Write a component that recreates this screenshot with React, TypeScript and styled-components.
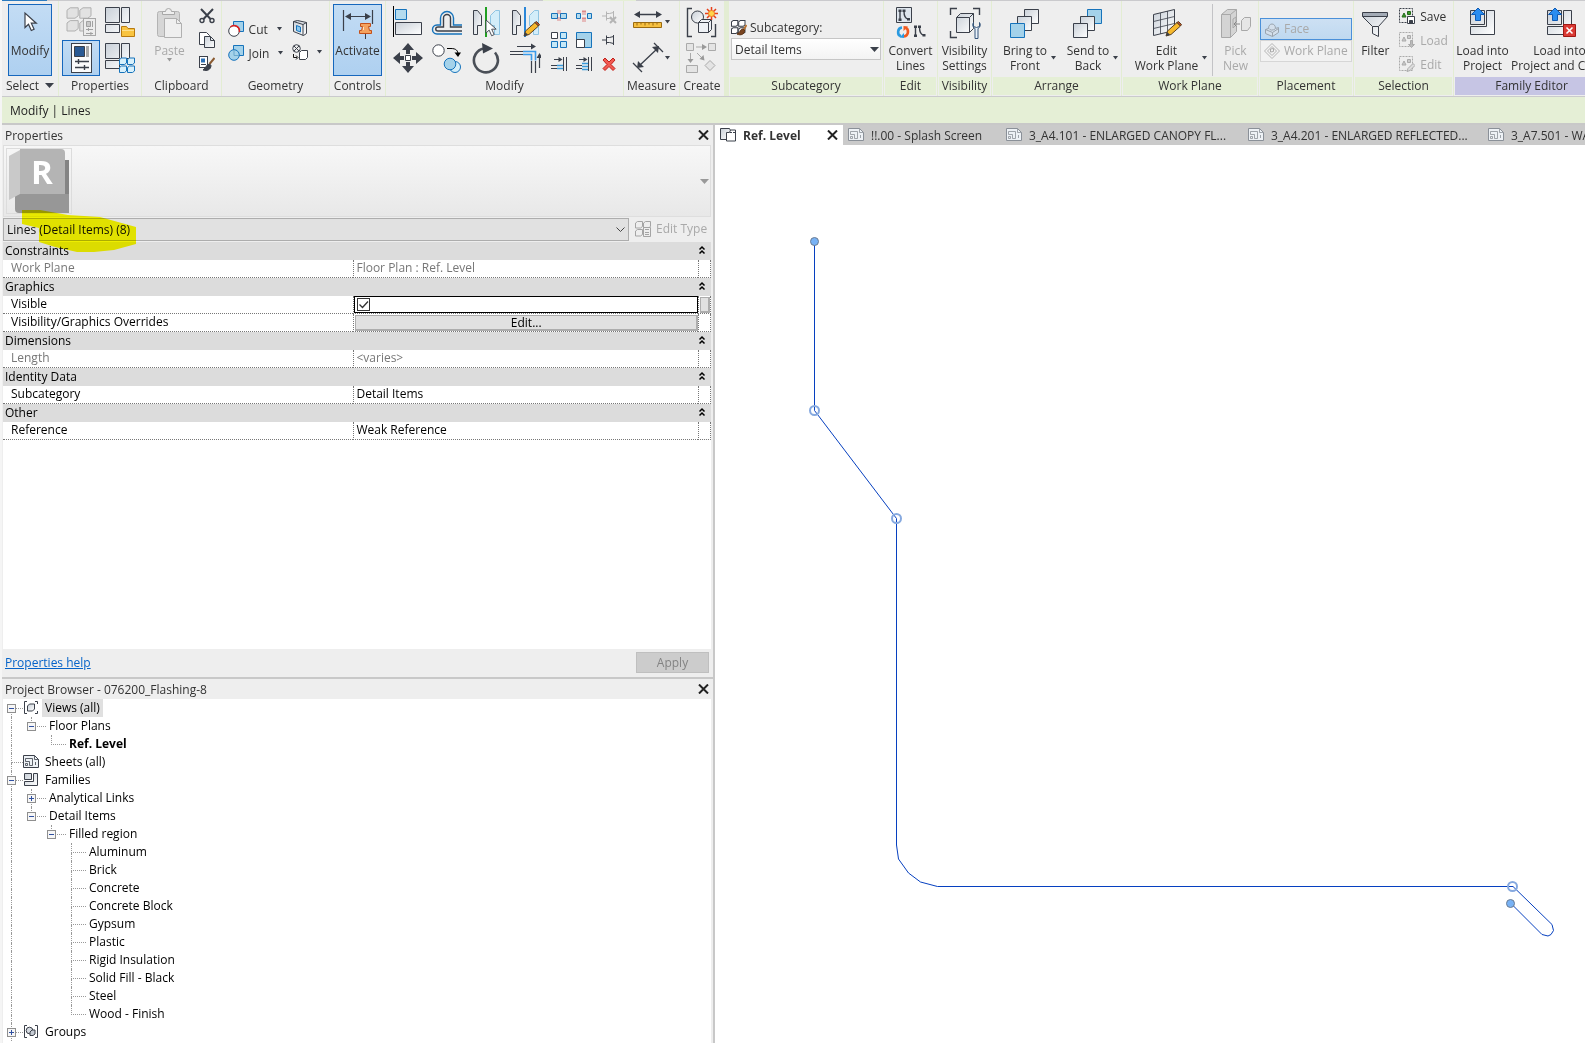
import React from "react";
import styled, { createGlobalStyle, css } from "styled-components";

const INK = "#3b404a";
const BLUE = "#1673bb";
const MUTED = "#a9a9a9";

const GlobalStyle = createGlobalStyle`
  * { box-sizing: border-box; }
  html, body { margin: 0; background: #fff; }
  body, button, select, input, table {
    font-family: "Open Sans", "Noto Sans", sans-serif;
    font-size: 12px;
    line-height: 15px;
  }
  button, select { border: 0; padding: 0; margin: 0; background: none; color: inherit; }
  svg { display: block; flex: none; }
`;

const Defs = styled.svg`
  position: absolute;
  width: 0;
  height: 0;
`;

/* ---------- page shell ---------- */

const Page = styled.div`
  display: flex;
  flex-direction: column;
  height: 100vh;
  min-height: 760px;
  padding-left: 2px;
  overflow: hidden;
  background: #f5f5f5;
  color: #333;
`;

const TopEdge = styled.div`
  flex: 0 0 1px;
  background: linear-gradient(
    90deg,
    #2a7abf 45px,
    #cacacd 45px 541px,
    #e5efd6 541px 634px,
    #cacacd 634px
  );
`;

const Ribbon = styled.header`
  display: flex;
  flex: 0 0 96px;
  overflow: hidden;
  background: #eee;
  border-bottom: 1px solid #cacacd;
`;

const OptionsBar = styled.div`
  display: flex;
  align-items: center;
  flex: 0 0 26px;
  padding: 0 8px;
  background: #e5efd6;
  color: #222;
`;

const Workspace = styled.main`
  display: grid;
  grid-template-columns: minmax(360px, 713fr) minmax(300px, 870fr);
  flex: 1;
  min-height: 0;
  border-top: 2px solid #c8c8c8;
`;

const Dock = styled.div`
  display: flex;
  flex-direction: column;
  min-width: 0;
  min-height: 0;
  padding: 0 2px 0 1px;
  background: #eee;
  border-right: 2px solid #c8c8c8;
`;

/* ---------- ribbon ---------- */

const Group = styled.section<{ $w: number; $wideEdge?: boolean }>`
  display: flex;
  flex-direction: column;
  flex: 0 0 ${(p) => p.$w}px;
  min-width: 0;
  padding-top: 1px;
  border-right: ${(p) => (p.$wideEdge ? 5 : 1)}px solid #e3edd3;
`;

const GroupBody = styled.div<{ $gap?: number; $pad?: number }>`
  display: flex;
  align-items: flex-start;
  justify-content: center;
  gap: ${(p) => p.$gap ?? 0}px;
  height: 75px;
  padding: 2px ${(p) => p.$pad ?? 0}px 0;
`;

const GroupLabel = styled.div<{ $tone?: "green" | "violet" }>`
  display: flex;
  align-items: center;
  justify-content: center;
  gap: 6px;
  height: 18px;
  margin: 0 1px;
  padding-bottom: 1px;
  white-space: nowrap;
  background: ${(p) => (p.$tone === "green" ? "#e5efd6" : p.$tone === "violet" ? "#c6c5e4" : "none")};
`;

const pressed = css`
  background: linear-gradient(#c3dcf4, #aed0f0);
  outline: 1px solid #1667bd;
  outline-offset: -1px;
`;

const LargeButton = styled.button<{ $w: number; $on?: boolean }>`
  display: flex;
  flex-direction: column;
  align-items: center;
  flex: 0 0 ${(p) => p.$w}px;
  min-width: 0;
  height: 72px;
  padding-top: 3px;
  text-align: center;
  white-space: nowrap;
  &:disabled { color: ${MUTED}; }
  ${(p) => p.$on && pressed}
`;

const Caption = styled.span<{ $menu?: boolean }>`
  display: grid;
  grid-template-columns: ${(p) => (p.$menu ? "10px auto 10px" : "0 auto 0")};
  align-items: center;
  margin-top: 4px;
  & > :first-child { grid-column: 2; }
  & > svg { justify-self: end; }
`;

const IconGrid = styled.div<{ $cols: number; $col: number; $row: number }>`
  display: grid;
  grid-template-columns: repeat(${(p) => p.$cols}, ${(p) => p.$col}px);
  grid-auto-rows: ${(p) => p.$row}px;
`;

const IconButton = styled.button<{ $on?: boolean }>`
  display: flex;
  align-items: center;
  justify-content: center;
  ${(p) => p.$on && pressed}
`;

const RowList = styled.div<{ $top?: number; $end?: number }>`
  display: flex;
  flex-direction: column;
  align-items: flex-start;
  padding: ${(p) => p.$top ?? 0}px ${(p) => p.$end ?? 0}px 0 0;
`;

const RowButton = styled.button`
  display: flex;
  align-items: center;
  gap: 5px;
  height: 24px;
  white-space: nowrap;
  &:disabled { color: ${MUTED}; }
  & > svg:nth-child(2) { margin-left: 3px; }
`;

const ToggleList = styled.div`
  display: flex;
  flex-direction: column;
  flex: 1;
  padding-top: 14px;
`;

const Toggle = styled.button<{ $on?: boolean }>`
  display: flex;
  align-items: center;
  gap: 4px;
  height: 22px;
  padding: 0 3px 1px;
  border: 1px solid ${(p) => (p.$on ? "#4a90d9" : "#d6d6d6")};
  background: ${(p) => (p.$on ? "linear-gradient(#cde0f3, #bfd9f0)" : "#f2f2f2")};
  white-space: nowrap;
  &:disabled { color: ${MUTED}; }
`;

const Separator = styled.div`
  width: 1px;
  height: 72px;
  margin: 0 2px;
  background: #c3c3c6;
`;

const Field = styled.div`
  display: flex;
  flex-direction: column;
  flex: 1;
  gap: 1px;
  padding-top: 14px;
`;

const FieldLabel = styled.label`
  display: flex;
  align-items: center;
  gap: 3px;
  height: 19px;
`;

const SelectBox = styled.div<{ $panel?: boolean }>`
  display: grid;
  align-items: center;
  flex: 1;
  & > * { grid-area: 1 / 1; }
  & > svg { justify-self: end; margin-right: ${(p) => (p.$panel ? 4 : 2)}px; pointer-events: none; }
`;

const Dropdown = styled.select<{ $panel?: boolean }>`
  width: 100%;
  height: ${(p) => (p.$panel ? 23 : 22)}px;
  padding: 0 3px;
  appearance: none;
  border: 1px solid ${(p) => (p.$panel ? "#adadad" : "#c6c6c6")};
  background: ${(p) => (p.$panel ? "#e1e1e1" : "linear-gradient(#fff, #f3f3f3)")};
  color: ${(p) => (p.$panel ? "#111" : "#333")};
`;

/* ---------- properties palette ---------- */

const Palette = styled.section<{ $fill?: boolean }>`
  display: flex;
  flex-direction: column;
  flex: ${(p) => (p.$fill ? "1 1 0" : "none")};
  min-height: 0;
`;

const PaletteTitle = styled.div`
  display: flex;
  align-items: center;
  justify-content: space-between;
  height: 20px;
  padding: 0 2px;
`;

const TypeCard = styled.div`
  display: flex;
  align-items: center;
  justify-content: space-between;
  height: 72px;
  padding: 0 1px 0 2px;
  border: 1px solid #dedede;
  background: linear-gradient(#f7f7f7, #e8e8e8);
`;

const Thumb = styled.div`
  display: flex;
  width: 66px;
  height: 66px;
  border: 1px solid #dcdcdc;
`;

const FilterRow = styled.div`
  position: relative;
  display: flex;
  align-items: center;
  gap: 6px;
  height: 25px;
`;

const Highlight = styled.svg`
  position: absolute;
  left: 19px;
  top: -7px;
  mix-blend-mode: multiply;
  pointer-events: none;
`;

const EditType = styled.button`
  display: flex;
  align-items: center;
  gap: 5px;
  width: 76px;
  padding-bottom: 2px;
  white-space: nowrap;
  &:disabled { color: ${MUTED}; }
`;

const TableArea = styled.div`
  flex: 1;
  min-height: 0;
  overflow: hidden;
  background: #fff;
`;

const Table = styled.table`
  width: 100%;
  table-layout: fixed;
  border-collapse: separate;
  border-spacing: 0;
  color: #000;
  & td, & th { height: 18px; padding: 0; line-height: 15px; font-weight: 400; text-align: left; white-space: nowrap; }
`;

const SectionHead = styled.th`
  background: #dcdcdc;
`;

const SectionLine = styled.div`
  display: flex;
  align-items: center;
  justify-content: space-between;
  height: 18px;
  padding: 0 4px 2px 2px;
`;

const PropName = styled.th<{ $dim?: boolean }>`
  border-bottom: 1px dotted #777;
  color: ${(p) => (p.$dim ? "#777" : "#000")};
  && { padding: 0 0 2px 8px; }
`;

const PropValue = styled.td<{ $dim?: boolean; $flush?: boolean }>`
  border-bottom: 1px dotted #777;
  border-left: 1px dotted #777;
  color: ${(p) => (p.$dim ? "#777" : "#000")};
  && { padding: ${(p) => (p.$flush ? "0" : "0 0 2px 2px")}; }
`;

const PropEnd = styled.td`
  border: dotted #777;
  border-width: 0 1px 1px;
`;

const ActiveCell = styled.div`
  display: flex;
  align-items: center;
  height: 17px;
  padding-left: 2px;
  border: 1px solid #000;
`;

const Check = styled.input`
  width: 13px;
  height: 13px;
  margin: 0;
  appearance: none;
  border: 1px solid #333;
  background: #fff;
  & + svg { visibility: hidden; }
  &:checked + svg { visibility: visible; }
`;

const CheckWrap = styled.label`
  display: grid;
  & > * { grid-area: 1 / 1; }
  & > svg { pointer-events: none; }
`;

const CellButton = styled.button`
  display: block;
  width: calc(100% - 1px);
  height: 16px;
  margin-left: 1px;
  border: 1px solid #adadad;
  border-width: 1px 2px 2px 1px;
  background: #e1e1e1;
  line-height: 13px;
`;

const PaletteFooter = styled.div`
  display: flex;
  align-items: center;
  justify-content: space-between;
  height: 28px;
  padding: 0 2px 2px;
`;

const HelpLink = styled.a`
  color: #0563c9;
  text-decoration: underline;
`;

const ApplyButton = styled.button`
  width: 73px;
  height: 21px;
  border: 1px solid #bfbfbf;
  background: #ccc;
  &:disabled { color: #838383; }
`;

/* ---------- project browser ---------- */

const BrowserTitle = styled(PaletteTitle)`
  height: 22px;
  margin: 0 -2px 0 -1px;
  padding: 0 4px 0 3px;
  border-top: 2px solid #c8c8c8;
`;

const Tree = styled.ul`
  margin: 0;
  padding: 0 0 2px;
  list-style: none;
  background: #fff;
  color: #000;
`;

const TreeRow = styled.li`
  display: flex;
  align-items: center;
  height: 18px;
  white-space: nowrap;
`;

const Guide = styled.span<{ $wide?: boolean }>`
  position: relative;
  display: grid;
  grid-template-columns: 8px 1fr;
  grid-template-rows: 10px 8px;
  flex: 0 0 ${(p) => (p.$wide ? 23 : 20)}px;
  height: 18px;
`;

const Arm = styled.i<{ $v?: boolean; $h?: boolean }>`
  grid-column: 2;
  border: 0 dotted #999;
  border-left-width: ${(p) => (p.$v ? 1 : 0)}px;
  border-bottom-width: ${(p) => (p.$h ? 1 : 0)}px;
`;

const Expander = styled.button`
  position: absolute;
  left: 4px;
  top: 5px;
  width: 9px;
  height: 9px;
  border: 1px solid #8f8f8f;
  background: #f6f6f6;
`;

const NodeText = styled.span<{ $sel?: boolean; $bold?: boolean; $icon?: boolean }>`
  height: 18px;
  padding: 0 3px;
  line-height: 18px;
  margin-left: ${(p) => (p.$icon ? 3 : 0)}px;
  background: ${(p) => (p.$sel ? "#e0e0e0" : "none")};
  font-weight: ${(p) => (p.$bold ? 700 : 400)};
`;

/* ---------- drawing area ---------- */

const Canvas = styled.div`
  display: flex;
  flex-direction: column;
  min-width: 0;
  min-height: 0;
  background: #fff;
`;

const TabStrip = styled.nav`
  display: flex;
  flex: 0 0 20px;
  overflow: hidden;
  background: #cacaca;
`;

const Tab = styled.button<{ $w: number; $on?: boolean }>`
  display: flex;
  align-items: center;
  gap: 7px;
  flex: 0 0 ${(p) => p.$w}px;
  padding: 0 5px;
  background: ${(p) => (p.$on ? "#fff" : "none")};
  font-weight: ${(p) => (p.$on ? 700 : 400)};
  white-space: nowrap;
  & > svg:last-child:not(:first-child) { margin-left: auto; }
`;

const Sketch = styled.svg`
  flex: 1;
  width: 100%;
  min-height: 0;
`;

/* ---------- icons ---------- */

type Kids = { children: React.ReactNode; s?: number; h?: number };
const Ic = ({ children, s = 16, h }: Kids) => (
  <svg width={s} height={h ?? s} viewBox={`0 0 ${s} ${h ?? s}`} fill="none" stroke={INK} strokeWidth="1" aria-hidden="true">
    {children}
  </svg>
);
const Big = ({ children }: { children: React.ReactNode }) => <Ic s={32}>{children}</Ic>;

const Caret = ({ color = INK }: { color?: string }) => (
  <svg width="7" height="4" viewBox="0 0 7 4" aria-hidden="true"><path d="M1 0h5L3.500 3.500z" fill={color} /></svg>
);
const WideCaret = ({ color = INK }: { color?: string }) => (
  <svg width="9" height="5" viewBox="0 0 9 5" aria-hidden="true"><path d="M0 0h9L4.500 5z" fill={color} /></svg>
);
const Cross = () => (
  <svg width="11" height="10" viewBox="0 0 11 10" stroke="#222" strokeWidth="2" aria-hidden="true"><path d="M1 .5l9 9M10 .5l-9 9" /></svg>
);
const DoubleUp = () => (
  <Ic s={10}><path d="M2.500 4.500l2.500-2.500 2.500 2.500M2.500 8.500l2.500-2.500 2.500 2.500" stroke="#000" strokeWidth="1.500" /></Ic>
);

const arrowCursor = "M0 0v14.500l3.500-3.300 2.800 6.300 2.800-1.300-2.800-6h5z";

const CursorIcon = () => (
  <Big><path d={arrowCursor} transform="translate(11 6)" fill="#fff" strokeWidth="1.200" /></Big>
);
const Cubes = ({ x, y, k = 1, c, f }: { x: number; y: number; k?: number; c: string; f: string }) => (
  <g transform={`translate(${x} ${y}) scale(${k})`} stroke={c} strokeWidth={1 / k} fill={f}>
    {[[0, 0], [8, 0], [0, 8], [8, 8]].map(([a, b]) => (
      <path key={`${a}-${b}`} d={`M${a} ${b + 2}l2-1.500h5v5l-2 1.500h-5z`} />
    ))}
  </g>
);
const Slider = ({ x, y, w, c = INK }: { x: number; y: number; w: number; c?: string }) => (
  <path d={`M${x} ${y}h${w}M${x + w * 0.35} ${y - 1.5}v3M${x} ${y + 4}h${w}M${x + w * 0.7} ${y + 2.5}v3`} stroke={c} />
);
const TypePropsIcon = () => (
  <Big>
    <Cubes x={2} y={1} k={1.6} c="#b0b0b0" f="#e2e2e2" />
    <rect x="18.500" y="12.500" width="12" height="17" fill="#ececec" stroke="#a8a8a8" />
    <path d="M21.500 15.500h4v5h-4z" stroke="#a0a0a0" fill="#c8c8c8" />
    <path d="M27.500 15v6" stroke="#a0a0a0" />
    <Slider x={21} y={23.5} w={7} c="#a0a0a0" />
  </Big>
);
const Windows = () => (
  <path d="M2.500 1.500h14v15h-14zM18.500 1.500h8v15h-8zM2.500 18.500h14v8h-14z" fill="url(#steel)" />
);
const FamilyFolderIcon = () => (
  <Big>
    <Windows />
    <path d="M18.500 30.500v-10h5l1.500 2h6.500v8z" fill="#f9c440" stroke="#b87a10" />
    <path d="M19 24.500h12" stroke="#ffe08a" />
  </Big>
);
const FamilyCubesIcon = () => (
  <Big><Windows /><Cubes x={16.5} y={15.5} c={BLUE} f="#d8f0fb" /></Big>
);
const PropsIcon = () => (
  <Big>
    <rect x="6.500" y="1.500" width="20" height="29" fill="#fbfbfb" />
    <path d="M9.500 4.500h10v10h-10z" fill="#2a5a94" />
    <path d="M21 4h3v11h-3z" fill="#aaa" stroke="none" />
    <path d="M10 19.500h14M10 25.500h14" strokeWidth="1.400" />
    <path d="M13.500 17v5M19.500 23v5" strokeWidth="1.400" />
  </Big>
);
const PasteIcon = () => (
  <Big>
    <rect x="3.500" y="4.500" width="22" height="25" rx="2" fill="#d6d6d6" stroke="#b4b4b4" />
    <path d="M8.500 7.500v-3h3a3 3 0 0 1 6 0h3v3z" fill="#eee" stroke="#a8a8a8" />
    <path d="M10.500 11.500h12l5 5v14h-17z" fill="#efefef" stroke="#b0b0b0" />
    <path d="M22.500 11.500v5h5" stroke="#b0b0b0" />
  </Big>
);
const CutIcon = () => (
  <Ic><path d="M2 1l9.500 10M14 1L4.500 11" strokeWidth="2" /><circle cx="3" cy="12.500" r="2" strokeWidth="1.400" /><circle cx="13" cy="12.500" r="2" strokeWidth="1.400" /></Ic>
);
const CopyIcon = () => (
  <Ic><path d="M.5 .5h7l3 3v9H.5z" fill="#fff" /><path d="M5.500 4.500h6l4 4v7h-10z" fill="url(#steel)" /><path d="M11.500 4.500v4h4" /></Ic>
);
const MatchIcon = () => (
  <Ic>
    <rect x=".5" y=".5" width="8" height="11" fill="#fff" />
    <path d="M2 2.500h4v4H2z" fill="#2a6fb5" stroke="none" /><path d="M2 8.500h5" />
    <path d="M15.500 2l-5 6" stroke="#8a5a30" strokeWidth="2" />
    <path d="M10.500 8c-3 .5-3 3-6.500 6 4 1.500 8-.5 8-4.500z" fill={INK} />
  </Ic>
);
const GeoCutIcon = () => (
  <Ic><path d="M5.500 .5h10v10h-10z" fill="#a4d2ea" stroke={BLUE} /><circle cx="6" cy="10" r="5.300" fill="#fff" /><path d="M2.500 6a5.300 5.300 0 0 1 8.800 5" stroke="#e02020" strokeWidth="1.500" /></Ic>
);
const GeoJoinIcon = () => (
  <Ic><path d="M5.500 .5h10v10h-10z" fill="#a4d2ea" stroke={BLUE} /><circle cx="6" cy="10" r="5.300" fill="#a4d2ea" stroke={BLUE} /><path d="M6 5v5.500h5" stroke="#6aa8cc" /></Ic>
);
const WallIcon = () => (
  <Ic><path d="M1.500 1.500l4-1 9 2v11l-3 2-10-4z" fill="url(#steel)" /><path d="M1.500 1.500l9.500 3v11M11 4.500l3.500-2" /><path d="M4.500 5.500l4 1.500v5l-4-1.500z" fill="#8cc8ee" stroke={BLUE} /></Ic>
);
const DemolishIcon = () => (
  <Ic><circle cx="4.500" cy="4.500" r="3.800" /><path d="M2 2l5 5M7 2L2 7" /><path d="M7.500 8.500l2-2h6v7l-2 2h-6z" fill="#fff" /><path d="M1.500 10v3.500H5M4 11.500l2 2-2 2" stroke="#111" /></Ic>
);
const ActivateIcon = () => (
  <Big>
    <path d="M1.500 3v21M30.500 3v14M4 9.500h24" strokeWidth="1.200" /><path d="M9 6L3 9.500 9 13zM23 6l6 3.500-6 3.500z" fill={INK} stroke="none" />
    <path d="M18.500 16.500h10v3h-2l1 4h2v3h-12v-3h2l1-4h-2z" fill="#f4a25e" stroke="#c4501a" /><path d="M21.500 20v3" stroke="#ffe0c0" /><path d="M23.500 27v5" />
  </Big>
);
const AlignIcon = () => (
  <Big><path d="M1.500 0v31" stroke="#000" /><path d="M3.500 3.500h11v10h-11z" fill="#b4dbee" stroke={BLUE} /><path d="M3.500 16.500h26v12h-26z" fill="url(#steel)" /></Big>
);
const OffsetIcon = () => (
  <Big>
    <path d="M31 28H6c-6 0-6-9 0-9h3.500v-7a6.500 6.500 0 0 1 13 0v7H31" stroke={BLUE} strokeWidth="1.400" />
    <path d="M31 25H7c-3 0-3-4 0-4h5.500v-9a3.500 3.500 0 0 1 7 0v9H31" strokeWidth="1.400" />
  </Big>
);
const mirrorHalves = (
  <>
    <path d="M3.500 4.500h4l4 5v10h-4v9h-4z" fill="url(#steel)" /><path d="M29.500 4.500h-4l-5 5v10h4v9h5z" fill="#d3edf9" stroke="#8fc4e2" />
  </>
);
const MirrorPickIcon = () => (
  <Big>{mirrorHalves}<path d="M16 1v30" stroke="#21a021" strokeWidth="2" /><path d={arrowCursor} transform="translate(16 14) scale(.9)" fill="#fff" /></Big>
);
const Pencil = ({ x, y }: { x: number; y: number }) => (
  <g transform={`translate(${x} ${y})`}>
    <path d="M0 15l1.500-5L11 1.500 14.500 5 5 13.500z" fill="#f7b92c" stroke="#5a4020" /><path d="M11 1.500L14.500 5l1-1.500L12.500.5z" fill="#c0502a" stroke="#5a4020" /><path d="M0 15l1.200-4L4 13.800z" fill={INK} stroke="none" />
  </g>
);
const MirrorDrawIcon = () => (
  <Big>{mirrorHalves}<path d="M16 1v30" stroke="#2a86d8" strokeWidth="2" /><Pencil x={15} y={15} /></Big>
);
const MoveIcon = () => (
  <Big>
    <path d="M16 1l6 7h-4v4h-4V8h-4zM16 31l-6-7h4v-4h4v4h4zM1 16l7-6v4h4v4H8v4zM31 16l-7 6v-4h-4v-4h4v-4z" fill={INK} stroke="none" />
    <path d="M13.500 13.500h5v5h-5z" fill="#fff" />
  </Big>
);
const CopyObjIcon = () => (
  <Big>
    <circle cx="7.500" cy="8.500" r="5.700" fill="#fff" /><path d="M16 6.500h4c5 0 7 2 7 6" stroke="#000" /><path d="M23.500 10.500L27 15l3-4.500z" fill="#000" stroke="none" />
    <circle cx="24" cy="25" r="5.500" fill="#d4eef9" stroke={BLUE} /><circle cx="19" cy="22" r="5.800" fill="#a4d2ea" stroke={BLUE} />
  </Big>
);
const RotateIcon = () => (
  <Big><path d="M25 10.500A12 12 0 1 1 14 6.500" stroke="#4a4f57" strokeWidth="2.600" /><path d="M12 1l11 5.500-10 5z" fill={INK} stroke="none" /></Big>
);
const TrimIcon = () => (
  <Big>
    <path d="M8 4.500h16M1 9.500h13M1 12.500h13M22.500 19v12M26.500 19v12M30.500 26V14" strokeWidth="1.200" /><path d="M22 1.500l5 3-5 3zM27.500 16l3-5 3 5z" fill={INK} stroke="none" />
    <path d="M14 9.500h12.500v9M14 12.500h8.500v6" stroke="#3a9ae9" strokeWidth="1.600" />
  </Big>
);
const SplitIcon = ({ gap }: { gap?: boolean }) => (
  <Ic>
    <path d={gap ? "M.5 5.500h4v5h-4zM11.500 5.500h4v5h-4z" : "M.5 5.500h6v5h-6zM9.500 5.500h6v5h-6z"} fill="#b4dbee" stroke={BLUE} />
    <path d="M7 2.500v4M9 2.500v4M7 9.500v4M9 9.500v4" stroke="#cc2222" strokeDasharray={gap ? "2 1" : "1 1"} />
  </Ic>
);
const PinIcon = ({ off }: { off?: boolean }) => {
  const c = off ? "#b4b4b4" : INK;
  return (
    <Ic>
      <path d="M1 8h4M5.500 3.500v9M5.500 5.500h3l4-1v7l-4-1h-3M12.500 3v10" stroke={c} />
      {off && <path d="M9 9l6 6M15 9l-6 6" stroke="#b4b4b4" strokeWidth="2" />}
    </Ic>
  );
};
const ArrayIcon = () => (
  <Ic><path d="M.5 .5h6v6h-6z" fill="#fff" /><path d="M9.500 .5h6v6h-6zM.5 9.500h6v6h-6zM9.500 9.500h6v6h-6z" fill="#c6e8f7" stroke={BLUE} /></Ic>
);
const ScaleIcon = () => (
  <Ic><path d="M.5 .5h15v15H.5z" fill="#a4d2ea" stroke={BLUE} /><path d="M.5 7.500h8v8h-8z" fill="#fff" /></Ic>
);
const ExtendIcon = ({ many }: { many?: boolean }) => (
  <Ic>
    <path d="M3 3.500h6M12.500 1v14M15.500 1v14M0 9.500h6M0 12.500h6" /><path d="M7.500 1l4 2.500-4 2.500z" fill={INK} stroke="none" />
    <path d={many ? "M6 7.500h6M6 10.500h6M6 13.500h6" : "M6 9.500h6M6 12.500h6"} stroke="#3a9ad9" strokeWidth="1.500" />
  </Ic>
);
const DeleteIcon = () => (
  <Ic><path d="M2 4l2-2 4 4 4-4 2 2-4 4.500 4 4-2 2-4-4-4 4-2-2 4-4z" fill="#f25a52" stroke="#c0201a" /></Ic>
);
const RulerIcon = () => (
  <Big>
    <path d="M4 8.500h24" strokeWidth="1.500" /><path d="M8 5L2 8.500 8 12zM24 5l6 3.500-6 3.500z" fill={INK} stroke="none" />
    <path d="M1.500 16.500h28v5h-28z" fill="#f6c040" stroke="#9a6a10" /><path d="M5 16.500v3M9 16.500v2M13 16.500v3M17 16.500v2M21 16.500v3M25 16.500v2" stroke="#9a6a10" />
  </Big>
);
const DimensionIcon = () => (
  <Big><path d="M7 24L26 6M1 21l9 9M22 1l9 9" strokeWidth="1.300" /><path d="M5 26l1-7 6 6zM27 4l-1 7-6-6z" fill={INK} stroke="none" /></Big>
);
const CreateIcon = () => (
  <Big>
    <path d="M6 2.500H1.500v28H6M25 30.500h4.500V18" strokeWidth="1.400" /><circle cx="11.500" cy="11" r="6" fill="url(#steel)" />
    <path d="M12.500 16.500l3-3h10v10l-3 3h-10z" fill="#eef1f5" /><path d="M12.500 16.500h10v10M22.500 16.500l3-3" />
    <path d="M25.500 1v13M19 7.500h13M21 3l9 9M30 3l-9 9" stroke="#e8401a" strokeWidth="1.500" /><circle cx="25.500" cy="7.500" r="3" fill="#ffd54a" stroke="#f08020" />
  </Big>
);
const SimilarIcon = () => (
  <Big>
    <g stroke="#aaa" fill="#e4e4e4">
      <path d="M.5 1.500h7v7h-7zM22.500 1.500h7v7h-7zM.5 23.500h11v7H.5zM24 18.500l5 5-5 5-5-5z" />
      <path d="M10 5h8M4.500 11v8M11 11l6 6" /><path d="M16 2l5 3-5 3zM1.500 17h6l-3 4zM18.500 18.500l-5-1.500 4-4z" fill="#999" stroke="none" />
    </g>
  </Big>
);
const SubcatIcon = () => (
  <Ic><Cubes x={0.5} y={0} k={0.9} c={INK} f="#fff" /><path d="M15.500 5l-3 5" stroke="#b87333" strokeWidth="2" /><path d="M12 9c-3 0-2 3-6 5 4 2 8 0 7.500-4z" fill="#7a4420" stroke="#5a3010" /></Ic>
);
const LineGlyph = ({ x, y }: { x: number; y: number }) => (
  <g transform={`translate(${x} ${y})`}>
    <path d="M2 1.500v8M6 1.500c0 5 1 7.500 4 8" strokeWidth="1.400" />
    <path d="M.5 0h3v2.500h-3zM.5 9h3v2.500h-3zM4.500 0h3v2.500h-3zM9 8.500h3V11H9z" fill={INK} stroke="none" />
  </g>
);
const ConvertIcon = () => (
  <Big>
    <path d="M1.500 .5h15v15h-15z" fill="#dfe6ee" /><LineGlyph x={3} y={2.5} /><LineGlyph x={18.5} y={18.5} />
    <path d="M7 20.500C2 21 2 28.500 6 29" stroke="#2a9ae0" strokeWidth="2.600" /><path d="M9 29.500c5-.5 5-8 1.500-8.500" stroke="#f05a20" strokeWidth="2.600" />
    <path d="M4.500 30.500l4.500.5v-5z" fill="#2a9ae0" stroke="none" /><path d="M13 19.500L8.500 19v5z" fill="#f05a20" stroke="none" />
  </Big>
);
const VisibilityIcon = () => (
  <Big>
    <path d="M1.500 8V1.500H8M24 1.500h6.500V8M1.500 24v6.500H8" strokeWidth="1.400" /><path d="M7.500 10.500l4-4h13v15l-4 4h-13z" fill="url(#steel)" /><path d="M7.500 10.500h13v15M20.500 10.500l4-4" />
    <path d="M26 21.500v10h3v-10a4 4 0 0 0 1.500-6v4l-3 1-3-1v-4a4 4 0 0 0 1.500 6z" fill="#eaf2fb" stroke="#35557a" />
  </Big>
);
const StackIcon = ({ front }: { front?: boolean }) => (
  <Big>
    <path d="M15.500 2.500h14v14h-14z" fill={front ? "url(#steel)" : "#a4d2ea"} stroke={front ? INK : BLUE} />
    <path d="M8.500 9.500h14v14h-14z" fill="url(#steel)" />
    <path d="M1.500 16.500h14v14h-14z" fill={front ? "#a4d2ea" : "url(#steel)"} stroke={front ? BLUE : INK} />
  </Big>
);
const WorkPlaneIcon = () => (
  <Big><path d="M2.500 7.500l21-5v21l-21 5z" fill="url(#steel)" /><path d="M2.500 14.500l21-5M2.500 21.500l21-5M9.500 6v21M16.500 4v21" strokeWidth=".8" /><Pencil x={15} y={14} /></Big>
);
const PickNewIcon = () => (
  <Big>
    <g stroke="#a8a8a8" fill="#d4d4d4"><path d="M1.500 7.500l6-5h9v22l-6 6h-9z" /><path d="M1.500 7.500h9v23M10.500 7.500l6-5M13 12l3-2v8l-3 3z" /><path d="M21.500 13.500l3-3h6v9l-3 4h-6z" fill="#e6e6e6" /><path d="M20 17h-6M16.500 14.500L14 17l2.500 2.500" stroke="#888" /></g>
  </Big>
);
const FaceIcon = () => (
  <Ic><path d="M1.500 8.500l3-1c0-6 7-6 7 0l3-1v5l-6 4-7-3z" stroke="#9aa4ae" fill="#d4e0ec" /><path d="M5 7.500c1 2 4 2 6 .5M8.500 15.500v-4l6-4M8.500 11.500l-7-3" stroke="#9aa4ae" /></Ic>
);
const PlaneIcon = () => (
  <Ic><path d="M8 .5L15.500 8 8 15.500.5 8zM8 3.500L12.500 8 8 12.500 3.500 8z" stroke="#b4b4b4" /><path d="M6.500 9V6l3-.5v3z" stroke="#aaa" /></Ic>
);
const FilterIcon = () => (
  <Big><path d="M3.500 5.500h25v4l-9 10v10l-6-3v-7l-10-10z" fill="url(#steel)" /><path d="M3.500 9.500h25M13.500 19.500h6" /><path d="M4 6h24v3H4z" fill="#a3abb6" stroke="none" /></Big>
);
const SelIcon = ({ kind }: { kind: "save" | "load" | "edit" }) => {
  const on = kind === "save";
  const c = on ? INK : "#aaa";
  return (
    <Ic>
      <path d="M.5 .5h13v14H.5z" stroke={c} strokeDasharray="2 1" />
      <path d="M3 9l2-4 2 4z" fill={on ? "#3a9a2a" : "#ccc"} stroke={on ? "#246a1a" : c} /><path d="M8.500 3.500h3v3h-3z" fill={on ? "#3a9a2a" : "#ccc"} stroke={on ? "#246a1a" : c} />
      {on && <><path d="M8.500 8.500h7v7h-7z" fill="#fff" /><path d="M10.500 12.500h3v3h-3z" fill={INK} /></>}
      {kind === "load" && <path d="M11.500 8.500h2v4h2l-3 3-3-3h2z" fill="#bbb" stroke="#aaa" />}
      {kind === "edit" && <path d="M8 15.500l1-3 5-5 2 2-5 5z" fill="#ddd" stroke="#aaa" />}
    </Ic>
  );
};
const LoadIcon = ({ close }: { close?: boolean }) => (
  <Big>
    <path d="M3.500 3.500h14v14h-14zM19.500 3.500h8v24h-24v-8h16z" fill="url(#steel)" />
    <path d="M11 1l6.500 6.500h-4v6h-5v-6h-4z" fill="#2a8df0" stroke="#0e5ab4" />
    {close && <><path d="M19.500 17.500h12v12h-12z" fill="#da3a34" stroke="#a01814" /><path d="M22.500 20.500l6 6M28.500 20.500l-6 6" stroke="#fff" strokeWidth="1.600" /></>}
  </Big>
);
const EditTypeIcon = () => (
  <Ic><Cubes x={0.5} y={0} c="#a4a4a4" f="none" /><path d="M8.500 6.500h7v9h-7z" fill="#eee" stroke="#a4a4a4" /><path d="M10 8.500h4M10 11.500h4M10 13.500h4" stroke="#a4a4a4" /></Ic>
);
const PlanTabIcon = () => (
  <Ic><path d="M.5 1.500h9l1 2v9H.5z" fill="url(#steel)" /><path d="M6.500 5.500h3l1-2.500h5v11h-9z" fill="#fff" /><path d="M7 5.500h8" strokeDasharray="2 1" /></Ic>
);
const SheetIcon = ({ c = INK }: { c?: string }) => (
  <Ic><path d="M.5 1.500h11l4 4v8H.5z" fill="#eef2f6" stroke={c} /><path d="M11.500 1.500v4h4M2.500 4.500h7v7h-3v-4h-4zM2.500 9.500h2v2h-2zM12.500 8v3" stroke={c} strokeWidth=".8" /></Ic>
);
const ViewsIcon = () => (
  <Ic><path d="M4 1.500H1.500v12H4M12 1.500h2.500V4M12 13.500h2.500V11" /><path d="M4.500 6l2-2h5v5l-2 2h-5z" fill="url(#steel)" /></Ic>
);
const FamiliesIcon = () => (
  <Ic><path d="M1.500 1.500h7v6h-7zM10.500 1.500h4v12h-13v-4h9z" fill="url(#steel)" /></Ic>
);
const GroupsIcon = () => (
  <Ic><path d="M4 1.500H1.500v12H4M12 1.500h2.500v12H12" /><circle cx="6.500" cy="6.500" r="3.300" fill="#d5dae0" /><path d="M7 8l2-2h3v4l-2 1.500H7z" fill="#c6ccd4" /></Ic>
);

/* ---------- ribbon assembly ---------- */

type GProps = { label: string; w: number; tone?: "green" | "violet"; gap?: number; pad?: number; wideEdge?: boolean; menu?: boolean; children: React.ReactNode };
const RibbonGroup = ({ label, w, tone, gap, pad, wideEdge, menu, children }: GProps) => (
  <Group $w={w} $wideEdge={wideEdge} aria-label={label}>
    <GroupBody $gap={gap} $pad={pad}>{children}</GroupBody>
    <GroupLabel $tone={tone}>{label}{menu && <WideCaret />}</GroupLabel>
  </Group>
);

type LProps = { icon: React.ReactNode; lines: string[]; w: number; on?: boolean; menu?: boolean; disabled?: boolean; below?: boolean };
const Large = ({ icon, lines, w, on, menu, disabled, below }: LProps) => (
  <LargeButton $w={w} $on={on} disabled={disabled}>
    {icon}
    <Caption $menu={menu}>
      <span>{lines.map((l) => <React.Fragment key={l}>{l}<br /></React.Fragment>)}</span>
      {menu && <Caret />}
    </Caption>
    {below && <Caret color="#999" />}
  </LargeButton>
);

const Tool = ({ name, on, children }: { name: string; on?: boolean; children: React.ReactNode }) => (
  <IconButton aria-label={name} $on={on}>{children}</IconButton>
);

/* ---------- properties data ---------- */

type Prop = { name: string; value?: string; dim?: boolean; kind?: "check" | "button" };
const sections: { title: string; rows: Prop[] }[] = [
  { title: "Constraints", rows: [{ name: "Work Plane", value: "Floor Plan : Ref. Level", dim: true }] },
  { title: "Graphics", rows: [{ name: "Visible", kind: "check" }, { name: "Visibility/Graphics Overrides", value: "Edit...", kind: "button" }] },
  { title: "Dimensions", rows: [{ name: "Length", value: "<varies>", dim: true }] },
  { title: "Identity Data", rows: [{ name: "Subcategory", value: "Detail Items" }] },
  { title: "Other", rows: [{ name: "Reference", value: "Weak Reference" }] },
];

const PropRow = ({ row }: { row: Prop }) => (
  <tr>
    <PropName scope="row" $dim={row.dim}>{row.kind === "check" ? <label htmlFor="visible">{row.name}</label> : row.name}</PropName>
    <PropValue $dim={row.dim} $flush={!!row.kind}>
      {row.kind === "check" && (
        <ActiveCell>
          <CheckWrap>
            <Check id="visible" type="checkbox" defaultChecked />
            <Ic s={13}><path d="M2.500 6.500l3 3 5.500-6" stroke="#333" strokeWidth="1.300" /></Ic>
          </CheckWrap>
        </ActiveCell>
      )}
      {row.kind === "button" && <CellButton>{row.value}</CellButton>}
      {!row.kind && row.value}
    </PropValue>
    <PropEnd>{row.kind === "check" && <CellButton aria-label="Associate parameter" />}</PropEnd>
  </tr>
);

/* Guide codes: v = passes through, t = branch, l = last branch, f = first branch, - = empty */
type Node = { text: string; guides: string; box?: "+" | "-"; icon?: React.ReactNode; sel?: boolean; bold?: boolean };
const nodes: Node[] = [
  { text: "Views (all)", guides: "f", box: "-", icon: <ViewsIcon />, sel: true },
  { text: "Floor Plans", guides: "vl", box: "-" },
  { text: "Ref. Level", guides: "v-l", bold: true },
  { text: "Sheets (all)", guides: "t", icon: <SheetIcon /> },
  { text: "Families", guides: "t", box: "-", icon: <FamiliesIcon /> },
  { text: "Analytical Links", guides: "vt", box: "+" },
  { text: "Detail Items", guides: "vl", box: "-" },
  { text: "Filled region", guides: "v-l", box: "-" },
  ...["Aluminum", "Brick", "Concrete", "Concrete Block", "Gypsum", "Plastic", "Rigid Insulation", "Solid Fill - Black", "Steel"].map(
    (text) => ({ text, guides: "v--t" }),
  ),
  { text: "Wood - Finish", guides: "v--l" },
  { text: "Groups", guides: "t", box: "+", icon: <GroupsIcon /> },
];

const TreeNode = ({ node }: { node: Node }) => {
  const codes = node.guides.split("");
  return (
    <TreeRow>
      {codes.map((c, i) => {
        const last = i === codes.length - 1;
        return (
          <Guide key={i} $wide={last && !node.icon}>
            <Arm $v={"vtl".includes(c)} $h={"tlf".includes(c)} />
            <Arm $v={"vtf".includes(c)} />
            {last && node.box && (
              <Expander aria-label={`Toggle ${node.text}`}>
                <Ic s={7}><path d={node.box === "+" ? "M1 3.500h5M3.500 1v5" : "M1 3.500h5"} stroke="#3050a0" /></Ic>
              </Expander>
            )}
          </Guide>
        );
      })}
      {node.icon}
      <NodeText $sel={node.sel} $bold={node.bold} $icon={!!node.icon}>{node.text}</NodeText>
    </TreeRow>
  );
};

const tabs = [
  { text: "!!.00 - Splash Screen", w: 158 },
  { text: "3_A4.101 - ENLARGED CANOPY FL...", w: 242 },
  { text: "3_A4.201 - ENLARGED REFLECTED...", w: 240 },
  { text: "3_A7.501 - WALL SECTION DETAILS", w: 240 },
];

export default function App() {
  return (
    <>
      <GlobalStyle />
      <Defs aria-hidden="true">
        <defs>
          <linearGradient id="steel" x1="0" y1="0" x2="1" y2="1">
            <stop offset="0" stopColor="#c9d0d8" />
            <stop offset="1" stopColor="#ffffff" />
          </linearGradient>
        </defs>
      </Defs>
      <Page>
        <TopEdge />
        <Ribbon>
          <RibbonGroup label="Select" w={57} menu>
            <Large icon={<CursorIcon />} lines={["Modify"]} w={44} on />
          </RibbonGroup>
          <RibbonGroup label="Properties" w={83}>
            <IconGrid $cols={2} $col={38} $row={36}>
              <Tool name="Type Properties"><TypePropsIcon /></Tool>
              <Tool name="Family Category"><FamilyFolderIcon /></Tool>
              <Tool name="Properties" on><PropsIcon /></Tool>
              <Tool name="Family Types"><FamilyCubesIcon /></Tool>
            </IconGrid>
          </RibbonGroup>
          <RibbonGroup label="Clipboard" w={80} gap={4}>
            <Large icon={<PasteIcon />} lines={["Paste"]} w={46} disabled below />
            <IconGrid $cols={1} $col={20} $row={24}>
              <Tool name="Cut"><CutIcon /></Tool>
              <Tool name="Copy"><CopyIcon /></Tool>
              <Tool name="Match Type"><MatchIcon /></Tool>
            </IconGrid>
          </RibbonGroup>
          <RibbonGroup label="Geometry" w={108} gap={8}>
            <RowList $top={13}>
              <RowButton><GeoCutIcon />Cut<Caret /></RowButton>
              <RowButton><GeoJoinIcon />Join<Caret /></RowButton>
            </RowList>
            <RowList $top={12}>
              <RowButton aria-label="Wall Joins"><WallIcon /></RowButton>
              <RowButton aria-label="Demolish"><DemolishIcon /><Caret /></RowButton>
            </RowList>
          </RibbonGroup>
          <RibbonGroup label="Controls" w={56}>
            <Large icon={<ActivateIcon />} lines={["Activate"]} w={49} on />
          </RibbonGroup>
          <RibbonGroup label="Modify" w={238} gap={2}>
            <IconGrid $cols={4} $col={39} $row={36}>
              <Tool name="Align"><AlignIcon /></Tool>
              <Tool name="Offset"><OffsetIcon /></Tool>
              <Tool name="Mirror - Pick Axis"><MirrorPickIcon /></Tool>
              <Tool name="Mirror - Draw Axis"><MirrorDrawIcon /></Tool>
              <Tool name="Move"><MoveIcon /></Tool>
              <Tool name="Copy elements"><CopyObjIcon /></Tool>
              <Tool name="Rotate"><RotateIcon /></Tool>
              <Tool name="Trim"><TrimIcon /></Tool>
            </IconGrid>
            <IconGrid $cols={3} $col={25} $row={24}>
              <Tool name="Split"><SplitIcon /></Tool>
              <Tool name="Split with Gap"><SplitIcon gap /></Tool>
              <Tool name="Unpin"><PinIcon off /></Tool>
              <Tool name="Array"><ArrayIcon /></Tool>
              <Tool name="Scale"><ScaleIcon /></Tool>
              <Tool name="Pin"><PinIcon /></Tool>
              <Tool name="Extend Single"><ExtendIcon /></Tool>
              <Tool name="Extend Multiple"><ExtendIcon many /></Tool>
              <Tool name="Delete"><DeleteIcon /></Tool>
            </IconGrid>
          </RibbonGroup>
          <RibbonGroup label="Measure" w={56}>
            <IconGrid $cols={1} $col={48} $row={36}>
              <Tool name="Measure"><RulerIcon /><Caret /></Tool>
              <Tool name="Dimension"><DimensionIcon /><Caret /></Tool>
            </IconGrid>
          </RibbonGroup>
          <RibbonGroup label="Create" w={49} wideEdge>
            <IconGrid $cols={1} $col={36} $row={36}>
              <Tool name="Create Group"><CreateIcon /></Tool>
              <Tool name="Create Similar"><SimilarIcon /></Tool>
            </IconGrid>
          </RibbonGroup>
          <RibbonGroup label="Subcategory" w={155} tone="green" pad={2}>
            <Field>
              <FieldLabel htmlFor="subcategory"><SubcatIcon />Subcategory:</FieldLabel>
              <SelectBox>
                <Dropdown id="subcategory"><option>Detail Items</option></Dropdown>
                <WideCaret />
              </SelectBox>
            </Field>
          </RibbonGroup>
          <RibbonGroup label="Edit" w={54} tone="green">
            <Large icon={<ConvertIcon />} lines={["Convert", "Lines"]} w={50} />
          </RibbonGroup>
          <RibbonGroup label="Visibility" w={54} tone="green">
            <Large icon={<VisibilityIcon />} lines={["Visibility", "Settings"]} w={50} />
          </RibbonGroup>
          <RibbonGroup label="Arrange" w={130} tone="green">
            <Large icon={<StackIcon front />} lines={["Bring to", "Front"]} w={63} menu />
            <Large icon={<StackIcon />} lines={["Send to", "Back"]} w={63} menu />
          </RibbonGroup>
          <RibbonGroup label="Work Plane" w={137} tone="green">
            <Large icon={<WorkPlaneIcon />} lines={["Edit", "Work Plane"]} w={86} menu />
            <Separator />
            <Large icon={<PickNewIcon />} lines={["Pick", "New"]} w={42} disabled />
          </RibbonGroup>
          <RibbonGroup label="Placement" w={95} tone="green" pad={1}>
            <ToggleList>
              <Toggle $on disabled><FaceIcon />Face</Toggle>
              <Toggle disabled><PlaneIcon />Work Plane</Toggle>
            </ToggleList>
          </RibbonGroup>
          <RibbonGroup label="Selection" w={100} tone="green" gap={4}>
            <Large icon={<FilterIcon />} lines={["Filter"]} w={40} />
            <RowList $end={4}>
              <RowButton><SelIcon kind="save" />Save</RowButton>
              <RowButton disabled><SelIcon kind="load" />Load</RowButton>
              <RowButton disabled><SelIcon kind="edit" />Edit</RowButton>
            </RowList>
          </RibbonGroup>
          <RibbonGroup label="Family Editor" w={156} tone="violet">
            <Large icon={<LoadIcon />} lines={["Load into", "Project"]} w={56} />
            <Large icon={<LoadIcon close />} lines={["Load into", "Project and Close"]} w={98} />
          </RibbonGroup>
        </Ribbon>
        <OptionsBar>Modify | Lines</OptionsBar>

        <Workspace>
          <Dock>
            <Palette $fill aria-label="Properties">
              <PaletteTitle>Properties<button aria-label="Close Properties"><Cross /></button></PaletteTitle>
              <TypeCard>
                <Thumb>
                  <Ic s={64}>
                    <g stroke="none">
                      <path d="M62 11v53H58V11z" fill="#848484" />
                      <path d="M8 45h54v19H12a4 4 0 0 1-4-4z" fill="#979797" />
                      <path d="M2 7l11-6v44L2 51z" fill="#c9c9c9" />
                      <path d="M13 0h41a4 4 0 0 1 4 4v41H13z" fill="#b4b4b4" />
                    </g>
                    <text x="24" y="35" fontFamily="Open Sans" fontSize="33" fontWeight="700" fill="#fff" stroke="none">R</text>
                  </Ic>
                </Thumb>
                <WideCaret color="#999" />
              </TypeCard>
              <FilterRow>
                <SelectBox $panel>
                  <Dropdown $panel aria-label="Element filter"><option>Lines (Detail Items) (8)</option></Dropdown>
                  <Ic s={9} h={6}><path d="M.5 .5l4 4 4-4" stroke="#444" /></Ic>
                </SelectBox>
                <EditType disabled><EditTypeIcon />Edit Type</EditType>
                <Highlight width="114" height="42" viewBox="0 0 114 42" aria-hidden="true">
                  <path d="M0 0h18l28 5 32 2 36 10v17l-22 6-20 2H55l-22-5-16-5V18L0 14z" fill="#ffff00" />
                </Highlight>
              </FilterRow>
              <TableArea>
                <Table>
                  <colgroup>
                    <col style={{ width: "49.5%" }} />
                    <col />
                    <col style={{ width: 13 }} />
                  </colgroup>
                  <tbody>
                    {sections.map((s) => (
                      <React.Fragment key={s.title}>
                        <tr>
                          <SectionHead colSpan={3} scope="rowgroup">
                            <SectionLine>{s.title}<button aria-label={`Collapse ${s.title}`}><DoubleUp /></button></SectionLine>
                          </SectionHead>
                        </tr>
                        {s.rows.map((r) => <PropRow key={r.name} row={r} />)}
                      </React.Fragment>
                    ))}
                  </tbody>
                </Table>
              </TableArea>
              <PaletteFooter>
                <HelpLink href="#help">Properties help</HelpLink>
                <ApplyButton disabled>Apply</ApplyButton>
              </PaletteFooter>
            </Palette>
            <Palette aria-label="Project Browser">
              <BrowserTitle>Project Browser - 076200_Flashing-8<button aria-label="Close Project Browser"><Cross /></button></BrowserTitle>
              <Tree>{nodes.map((n) => <TreeNode key={n.text} node={n} />)}</Tree>
            </Palette>
          </Dock>

          <Canvas>
            <TabStrip>
              <Tab $w={128} $on><PlanTabIcon />Ref. Level<Cross /></Tab>
              {tabs.map((t) => <Tab key={t.text} $w={t.w}><SheetIcon c="#8a9098" />{t.text}</Tab>)}
            </TabStrip>
            <Sketch viewBox="0 0 870 898" preserveAspectRatio="xMinYMin meet" fill="none" aria-label="Flashing profile">
              <path
                stroke="#0640c0"
                d="M99.500 97V265.500L181.500 373.500V700l2 14 10 14 12 9 17 4.500H798l39 38 1.500 6-2.500 4-3 1.500-6-1.500-31-31"
              />
              <g stroke="#86a9df" strokeWidth="2">
                <circle cx="99.500" cy="265.500" r="4.500" />
                <circle cx="181.500" cy="373.500" r="4.500" />
                <circle cx="797.500" cy="741.500" r="4.500" />
              </g>
              <g fill="#78b2f5" stroke="#6b7c92">
                <circle cx="99.500" cy="96.500" r="4" />
                <circle cx="795.500" cy="758.500" r="4" />
              </g>
            </Sketch>
          </Canvas>
        </Workspace>
      </Page>
    </>
  );
}
